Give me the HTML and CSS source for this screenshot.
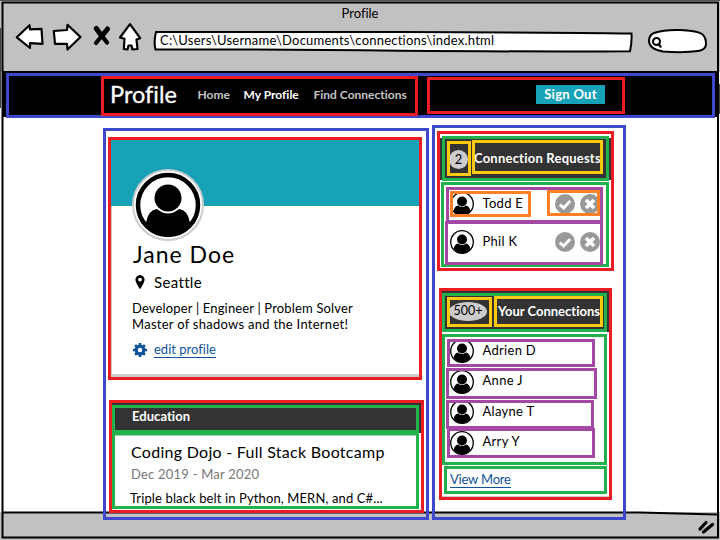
FILE: index.html
```
<!DOCTYPE html>
<html lang="en">
<head>
<meta charset="utf-8">
<title>Profile</title>
<link rel="stylesheet" href="styles.css">
</head>
<body>
<svg class="defs" width="0" height="0">
  <defs>
    <symbol id="avatar" viewBox="0 0 72 72">
      <circle cx="36" cy="36" r="30" fill="#fff" stroke="#000" stroke-width="4.5"/>
      <path d="M14 54 Q16 41 25 40 Q36 49 47 40 Q56 41 58 54 Q49 66 36 66 Q23 66 14 54Z"/>
      <circle cx="36" cy="29" r="13.5"/>
    </symbol>
    <symbol id="person" viewBox="0 0 24 24">
      <circle cx="12" cy="12" r="11.3" fill="#fff" stroke="#000" stroke-width="1.3"/>
      <path d="M3.6 18.8 Q4.5 14 8 13.4 Q12 16.6 16 13.4 Q19.500 14 20.400 18.800 Q17 23.200 12 23.200 Q7 23.200 3.600 18.800Z"/>
      <circle cx="12" cy="9.500" r="5"/>
    </symbol>
    <symbol id="check" viewBox="0 0 20 20">
      <circle cx="10" cy="10" r="10" fill="#999"/>
      <path d="M4.800 10.600 L8.600 14 L15.200 7" fill="none" stroke="#fff" stroke-width="3"/>
    </symbol>
    <symbol id="cross" viewBox="0 0 20 20">
      <circle cx="10" cy="10" r="10" fill="#999"/>
      <path d="M6 6 L14 14 M14 6 L6 14" fill="none" stroke="#fff" stroke-width="3.600"/>
    </symbol>
  </defs>
</svg>

<header class="toolbar">
  <div class="window-title">Profile</div>
  <div class="controls">
    <svg class="tools" width="140" height="36" viewBox="10 20 140 36">
      <g fill="#fff" stroke="#000" stroke-width="2.200" stroke-linejoin="round">
        <path d="M16.800 37.300 L29.500 25.200 L30 29.300 L41.500 28.800 L42.500 43.800 L30 43.200 L30 48 Z"/>
        <path d="M53.800 31 L67 30 L67.500 24.800 L80.500 37 L67.500 49.500 L67 43.800 L55 43.800 Z"/>
        <path d="M120 37.500 L130 24.200 L140.200 38.200 L136.500 39.500 L137.500 49 L132.500 49.500 L131.500 45.500 L128.500 45.500 L127.500 49.500 L123.800 49 L124.500 38.800 Z"/>
      </g>
      <path d="M96.300 28.500 L107 42.500 M107.500 29 L96 43" stroke="#000" stroke-width="4.200" stroke-linecap="round"/>
      <path d="M96.300 28.500 L101 35 M107.500 29 L102 36" stroke="#000" stroke-width="5" stroke-linecap="round"/>
    </svg>
    <div class="address">
      <svg class="address-shape" width="480" height="24" viewBox="153 29 480 24"><path d="M156 32 Q240 31.500 400 32 T631.500 33.500 Q632 42 630 51.300 Q540 51.800 400 50.800 Q270 49 155.500 49.500 Q153.500 42 156 32Z" fill="#fff" stroke="#000" stroke-width="2"/></svg>
      <span class="url">C:\Users\Username\Documents\connections\index.html</span>
    </div>
    <svg class="search" width="62" height="28" viewBox="646 28 62 28">
      <path d="M654 33 Q664 29.500 680 30 T702 34 Q706 37 706 44 Q706 50 698 51 Q684 53 663 51.500 Q649 49 649 41 Q649 35 654 33Z" fill="#fff" stroke="#000" stroke-width="2"/>
      <circle cx="656.500" cy="41.500" r="3.500" fill="none" stroke="#000" stroke-width="2"/>
      <path d="M658.500 44 L660.500 46.500" stroke="#000" stroke-width="2.400" stroke-linecap="round"/>
    </svg>
  </div>
</header>

<nav class="navbar">
  <span class="brand">Profile</span>
  <span class="link home">Home</span>
  <span class="link active">My Profile</span>
  <span class="link find">Find Connections</span>
  <span class="sign-out"><span>Sign Out</span></span>
</nav>

<main class="content">
  <div class="left-column">
    <section class="profile-card">
      <div class="banner"></div>
      <svg class="portrait" viewBox="0 0 72 72"><circle cx="36" cy="36" r="35" fill="#fff" stroke="#ccc" stroke-width="2"/><use href="#avatar"/></svg>
      <h1 class="name">Jane Doe</h1>
      <div class="place">
        <svg width="10" height="14" viewBox="0 0 10 14"><path fill-rule="evenodd" d="M5 0 A4.700 4.700 0 0 1 9.600 4.800 Q9.500 7.200 5.400 13.800 H4.600 Q.5 7.200 .4 4.800 A4.700 4.700 0 0 1 5 0Z M5 2.700 A1.900 1.900 0 1 0 5 6.500 A1.900 1.900 0 1 0 5 2.700Z"/></svg>
        <span>Seattle</span>
      </div>
      <p class="bio"><span class="bio-roles">Developer | Engineer | Problem Solver</span><br><span class="bio-motto">Master of shadows and the Internet!</span></p>
      <div class="edit">
        <svg width="14" height="14" viewBox="-7 -7 14 14"><circle r="3.800" fill="none" stroke="#10529b" stroke-width="3.200"/><path d="M0 -7V-4M0 7V4M-7 0H-4M7 0H4M-4.900 -4.900L-3 -3M4.900 4.900L3 3M-4.900 4.900L-3 3M4.900 -4.900L3 -3" stroke="#10529b" stroke-width="2.700"/></svg>
        <span class="text-link">edit profile</span>
      </div>
    </section>
    <section class="education-card">
      <h2 class="education-head">Education</h2>
      <h3 class="school">Coding Dojo - Full Stack Bootcamp</h3>
      <p class="dates">Dec 2019 - Mar 2020</p>
      <p class="summary">Triple black belt in Python, MERN, and C#...</p>
    </section>
  </div>

  <div class="right-column">
    <section class="requests">
      <div class="card-head requests-head"><span class="count">2</span><h2>Connection Requests</h2></div>
      <div class="request"><svg class="face"><use href="#person"/></svg><span class="person todd">Todd E</span><svg class="action"><use href="#check"/></svg><svg class="action"><use href="#cross"/></svg></div>
      <div class="request"><svg class="face"><use href="#person"/></svg><span class="person phil">Phil K</span><svg class="action"><use href="#check"/></svg><svg class="action"><use href="#cross"/></svg></div>
    </section>
    <section class="connections">
      <div class="card-head connections-head"><span class="count many">500+</span><h2>Your Connections</h2></div>
      <div class="people">
        <div class="connection"><svg class="face"><use href="#person"/></svg><span class="person">Adrien D</span></div>
        <div class="connection"><svg class="face"><use href="#person"/></svg><span class="person">Anne J</span></div>
        <div class="connection"><svg class="face"><use href="#person"/></svg><span class="person">Alayne T</span></div>
        <div class="connection"><svg class="face"><use href="#person"/></svg><span class="person">Arry Y</span></div>
      </div>
      <div class="more"><span class="text-link">View More</span></div>
    </section>
  </div>
</main>

<footer class="statusbar">
  <svg width="18" height="16" viewBox="697 519 18 16"><path d="M700 529 L706 522.500 M703.500 532 L712.500 524.500" stroke="#000" stroke-width="3.200" stroke-linecap="round"/></svg>
</footer>

<svg class="overlay" width="720" height="540" viewBox="0 0 720 540" fill="none">
  <g stroke="#000" stroke-width="2">
    <path d="M2.500 2.500 H718 V537.500 H2.500 Z"/>
    <path d="M3 72 H717"/>
    <path d="M3 512.500 L400 512.500 L640 512.500 L717 514.500"/>
    <path d="M0.500 28 V108 M719.500 84 V114" stroke="#444" stroke-width="1"/>
    <path d="M0 0.500 H720" stroke="#555" stroke-width="1"/>
  </g>
  <g stroke-width="3">
    <g stroke="#3f48cc">
      <rect x="7.500" y="74.500" width="706" height="42"/>
      <rect x="104.500" y="129.500" width="323" height="389"/>
      <rect x="433.500" y="126.500" width="191" height="392"/>
    </g>
    <g stroke="#ed1c24">
      <rect x="102.500" y="77.500" width="314" height="37"/>
      <rect x="428.500" y="78.500" width="195" height="34"/>
      <rect x="109.500" y="138.500" width="311" height="240"/>
      <rect x="110.500" y="401.500" width="312" height="110"/>
      <rect x="438.500" y="132.500" width="174" height="137"/>
      <rect x="440.500" y="289.500" width="170" height="209"/>
    </g>
    <g stroke="#22b14c">
      <rect x="113.500" y="406.500" width="304" height="25"/>
      <rect x="113.500" y="434" width="304" height="73.500"/>
      <rect x="443.500" y="137.500" width="164" height="42"/>
      <rect x="442.500" y="183.500" width="165" height="82"/>
      <rect x="443.500" y="294.500" width="162" height="36"/>
      <rect x="443.500" y="335.500" width="162" height="128"/>
      <rect x="445.500" y="467.500" width="160" height="25"/>
    </g>
    <g stroke="#ffc90e">
      <rect x="448.500" y="142.500" width="21" height="32"/>
      <rect x="473.500" y="141.500" width="128" height="31"/>
      <rect x="448.500" y="298.500" width="42" height="27"/>
      <rect x="495.500" y="297.500" width="106" height="28"/>
    </g>
    <g stroke="#a349a4">
      <rect x="447.500" y="188.500" width="154" height="33"/>
      <rect x="446.500" y="222.500" width="155" height="41"/>
      <rect x="448.500" y="340.500" width="145" height="25"/>
      <rect x="447.500" y="369.500" width="148" height="28"/>
      <rect x="447.500" y="401.500" width="145" height="26"/>
      <rect x="448.500" y="429.500" width="145" height="27"/>
    </g>
    <g stroke="#ff7f27">
      <rect x="451.500" y="192.500" width="78" height="23"/>
      <rect x="548.500" y="191.500" width="50" height="23"/>
    </g>
  </g>
</svg>
</body>
</html>
```
FILE: styles.css
```
* { box-sizing: border-box; }
body {
  margin: 0;
  width: 720px;
  height: 540px;
  overflow: hidden;
  position: relative;
  display: flex;
  flex-direction: column;
  background: #fff;
  color: #000;
  font: 13px/16px Lato, "Open Sans", sans-serif;
  font-variant-ligatures: none;
  white-space: nowrap;
}
h1, h2, h3, p { margin: 0; font-weight: 400; }
svg { display: block; flex: none; }
.defs { position: absolute; }
.overlay { position: absolute; left: 0; top: 0; }

.toolbar { height: 72px; background: #c1c1c1; padding-top: 5px; }
.window-title { text-align: center; line-height: 17px; height: 15px; }
.controls { display: flex; align-items: flex-start; padding-left: 10px; }
.address { display: grid; margin: 9px 13px 0 3px; }
.address-shape, .url { grid-area: 1 / 1; }
.url { padding-left: 7px; line-height: 23px; letter-spacing: .22px; z-index: 1; }
.search { margin-top: 8px; }

.navbar { height: 45px; width: 714px; margin-left: 3px; background: #000; display: flex; align-items: flex-start; padding: 7px 0 0 107px; color: #fff; }
.brand { width: 87.500px; font-size: 23.500px; line-height: 30px; -webkit-text-stroke: .3px #fff; }
.link { font-size: 12px; font-weight: 700; color: #c4c4c4; padding-top: 8px; }
.home { width: 46px; }
.active { width: 70px; color: #fff; }
.find { width: 222.500px; }
.sign-out { width: 69px; height: 19px; margin-top: 6px; line-height: 18px; background: #18a2b8; text-align: center; font-size: 13px; font-weight: 700; letter-spacing: .3px; }

.content { height: 395px; display: flex; padding: 21px 0 0 109px; }
.left-column { width: 331px; }
.profile-card { width: 312px; height: 241px; border: solid #ccc; border-width: 0 1px 5px 3px; }
.banner { height: 68px; background: #18a2b8; margin-left: -3px; }
.portrait { width: 72px; height: 72px; margin: -37px 0 0 20px; }
.name { font-size: 23px; line-height: 28px; margin: -1px 0 0 21px; letter-spacing: 1px; }
.place { display: flex; align-items: center; height: 20px; padding-left: 23px; margin-top: 4px; gap: 9px; font-size: 15px; letter-spacing: .35px; }
.bio { margin: 8px 0 0 20px; }
.bio-roles { letter-spacing: .16px; }
.bio-motto { letter-spacing: .27px; }
.edit { display: flex; align-items: center; gap: 7px; margin: 10px 0 0 21px; }
.text-link { color: #10529b; line-height: 15px; border-bottom: 1px solid #10529b; }
.education-card { width: 312px; height: 110px; margin: 23px 0 0 1px; }
.education-head { height: 31px; background: #333; color: #fff; font-size: 13px; font-weight: 700; line-height: 29px; padding-left: 22px; letter-spacing: .05px; }
.school { margin: 9px 0 0 21px; font-size: 16px; line-height: 20px; letter-spacing: .28px; }
.dates { margin: 4px 0 0 21px; color: #777; letter-spacing: .22px; }
.summary { margin: 8px 0 0 20px; letter-spacing: .12px; }

.right-column { width: 172px; }
.requests { height: 133px; border-right: 1px solid #ccc; }
.card-head { background: #333; display: flex; align-items: center; color: #fff; }
.card-head h2 { font-size: 13px; font-weight: 700; padding-bottom: 2px; }
.count { width: 19px; height: 19px; border-radius: 50%; background: #ccc; color: #000; line-height: 18px; text-align: center; }
.requests-head { height: 42px; padding-left: 9px; }
.requests-head h2 { margin-left: 6px; letter-spacing: .22px; }
.request { display: flex; align-items: center; height: 38px; padding-left: 10px; }
.requests-head + .request { margin-top: 5px; }
.face { width: 24px; height: 24px; }
.person { margin-left: 8.500px; line-height: 20px; padding-bottom: 3px; letter-spacing: .3px; }
.request .person { width: 72.500px; }
.action { width: 20px; height: 20px; margin-right: 5px; }
.connections { width: 170px; height: 208px; margin: 20px 0 0 1px; border: solid #ccc; border-width: 0 2px 3px 1px; }
.connections-head { height: 41px; padding-left: 7px; }
.many { width: 38px; font-size: 12.500px; }
.connections-head h2 { margin-left: 11px; }
.people { padding: 4px 0 0 8px; }
.connection { display: flex; align-items: center; height: 30.500px; }
.more { padding: 13px 0 0 8px; }
.more .text-link { letter-spacing: -.2px; }

.statusbar { height: 28px; background: #c1c1c1; display: flex; justify-content: flex-end; align-items: flex-start; padding: 7px 5px 0 0; }
```
